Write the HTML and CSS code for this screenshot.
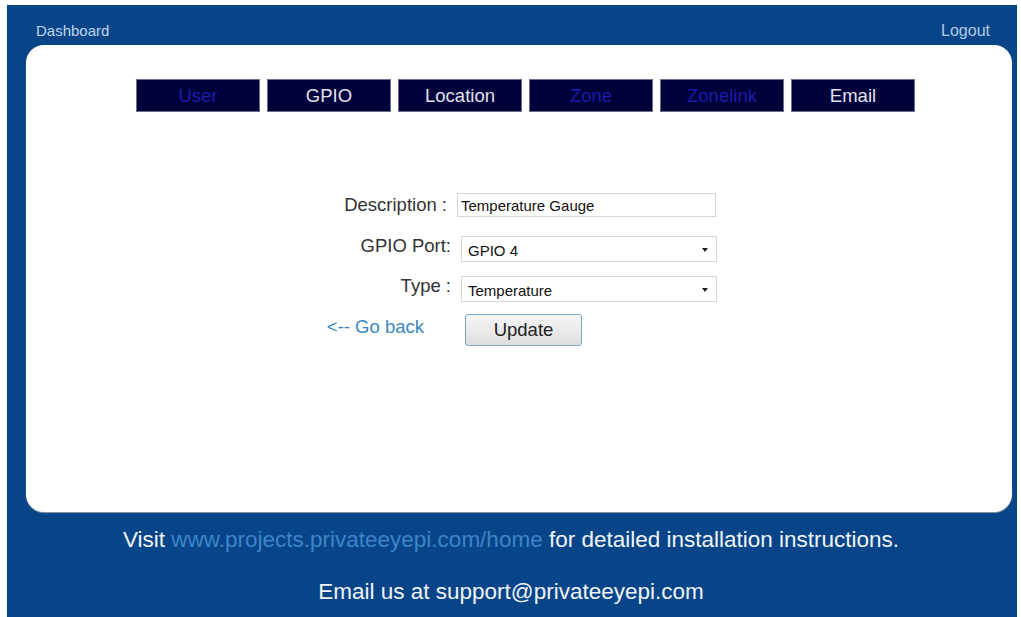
FILE: index.html
```html
<!DOCTYPE html>
<html>
<head>
<meta charset="utf-8">
<title>GPIO</title>
<link rel="stylesheet" href="styles.css">
</head>
<body>
<div class="frame">
  <header class="topbar">
    <a class="top-link" href="#">Dashboard</a>
    <a class="top-link" href="#">Logout</a>
  </header>
  <main class="card">
    <nav class="tabs">
      <a class="tab visited" href="#">User</a>
      <a class="tab" href="#">GPIO</a>
      <a class="tab" href="#">Location</a>
      <a class="tab visited" href="#">Zone</a>
      <a class="tab visited" href="#">Zonelink</a>
      <a class="tab" href="#">Email</a>
    </nav>
    <form class="form">
      <div class="row">
        <label class="label">Description :</label>
        <input class="field text" type="text" value="Temperature Gauge">
      </div>
      <div class="row">
        <label class="label">GPIO Port:</label>
        <div class="field select"><span>GPIO 4</span><span class="caret"></span></div>
      </div>
      <div class="row">
        <label class="label">Type :</label>
        <div class="field select"><span>Temperature</span><span class="caret"></span></div>
      </div>
      <div class="row actions">
        <a class="back" href="#">&lt;-- Go back</a>
        <button class="btn" type="button">Update</button>
      </div>
    </form>
  </main>
  <footer class="footer">
    <p class="foot-line">Visit <a class="foot-link" href="#">www.projects.privateeyepi.com/home</a> for detailed installation instructions.</p>
    <p class="foot-line">Email us at support@privateeyepi.com</p>
  </footer>
</div>
</body>
</html>
```

FILE: styles.css
```css
html, body {
  margin: 0;
  padding: 0;
  background: #ffffff;
}

body {
  padding: 5px 4px 0 7px;
  font-family: "Liberation Sans", Arial, sans-serif;
}

.frame {
  background: #084588;
  height: 612px;
  display: flex;
  flex-direction: column;
}

.topbar {
  height: 40px;
  display: flex;
  justify-content: space-between;
  align-items: flex-end;
  padding: 0 27px 0 29px;
  box-sizing: border-box;
}

.top-link {
  color: #c2d4ea;
  font-size: 15px;
  text-decoration: none;
  line-height: 16px;
  margin-bottom: 6px;
}

.top-link + .top-link {
  font-size: 16px;
  color: #b4cbe6;
}

.card {
  margin: 0 5px 0 19px;
  height: 467px;
  background: #ffffff;
  border-radius: 18px;
  box-shadow: 0 1px 1px #8a98a8;
  box-sizing: border-box;
  padding-top: 34px;
}

.tabs {
  display: flex;
  gap: 7px;
  margin-left: 110px;
}

.tab {
  width: 124px;
  height: 33px;
  box-sizing: border-box;
  background: #00003b;
  border: 1px solid #6e6e88;
  color: #e2e2ec;
  font-size: 18.5px;
  text-decoration: none;
  display: flex;
  align-items: center;
  justify-content: center;
}

.tab.visited {
  color: #1c1ca8;
}

.form {
  margin-top: 81px;
  display: flex;
  flex-direction: column;
}

.row {
  display: flex;
  align-items: center;
  height: 24px;
  margin-bottom: 19px;
}

.label {
  width: 431px;
  text-align: right;
  font-size: 18.5px;
  color: #333333;
  padding-right: 10px;
  box-sizing: border-box;
}

.row:nth-child(2), .row:nth-child(3) {
  height: 26px;
  margin-bottom: 14px;
}

.row:nth-child(2) .label, .row:nth-child(3) .label {
  width: 435px;
  padding-right: 10px;
  margin-top: -7px;
}

.field {
  box-sizing: border-box;
  border: 1px solid #d6d6d6;
  background: #ffffff;
  font-family: "Liberation Sans", Arial, sans-serif;
  font-size: 15px;
  color: #111111;
}

.text {
  width: 259px;
  height: 24px;
  padding: 0 3px;
  outline: none;
}

.select {
  width: 256px;
  height: 26px;
  display: flex;
  align-items: center;
  justify-content: space-between;
  padding: 2px 8px 0 6px;
}

.caret {
  width: 0;
  height: 0;
  border-left: 3.5px solid transparent;
  border-right: 3.5px solid transparent;
  border-top: 4px solid #222222;
}

.actions {
  height: 32px;
  margin-top: -2px;
}

.back {
  width: 398px;
  text-align: right;
  color: #3a88c0;
  font-size: 18.5px;
  text-decoration: none;
  margin-top: -6px;
}

.btn {
  margin-left: 41px;
  width: 117px;
  height: 32px;
  border: 1px solid #7aa6c8;
  border-radius: 3px;
  background: linear-gradient(#f6f6f6, #dedede);
  font-family: "Liberation Sans", Arial, sans-serif;
  font-size: 18.5px;
  color: #222222;
  padding: 0;
}

.footer {
  text-align: center;
  color: #f0f4f8;
  font-size: 22.5px;
  padding-right: 2px;
}

.foot-line {
  margin: 15px 0 0;
  line-height: 26px;
}

.foot-line + .foot-line {
  margin-top: 26px;
}

.foot-link {
  color: #3b86c8;
  text-decoration: none;
}
```
